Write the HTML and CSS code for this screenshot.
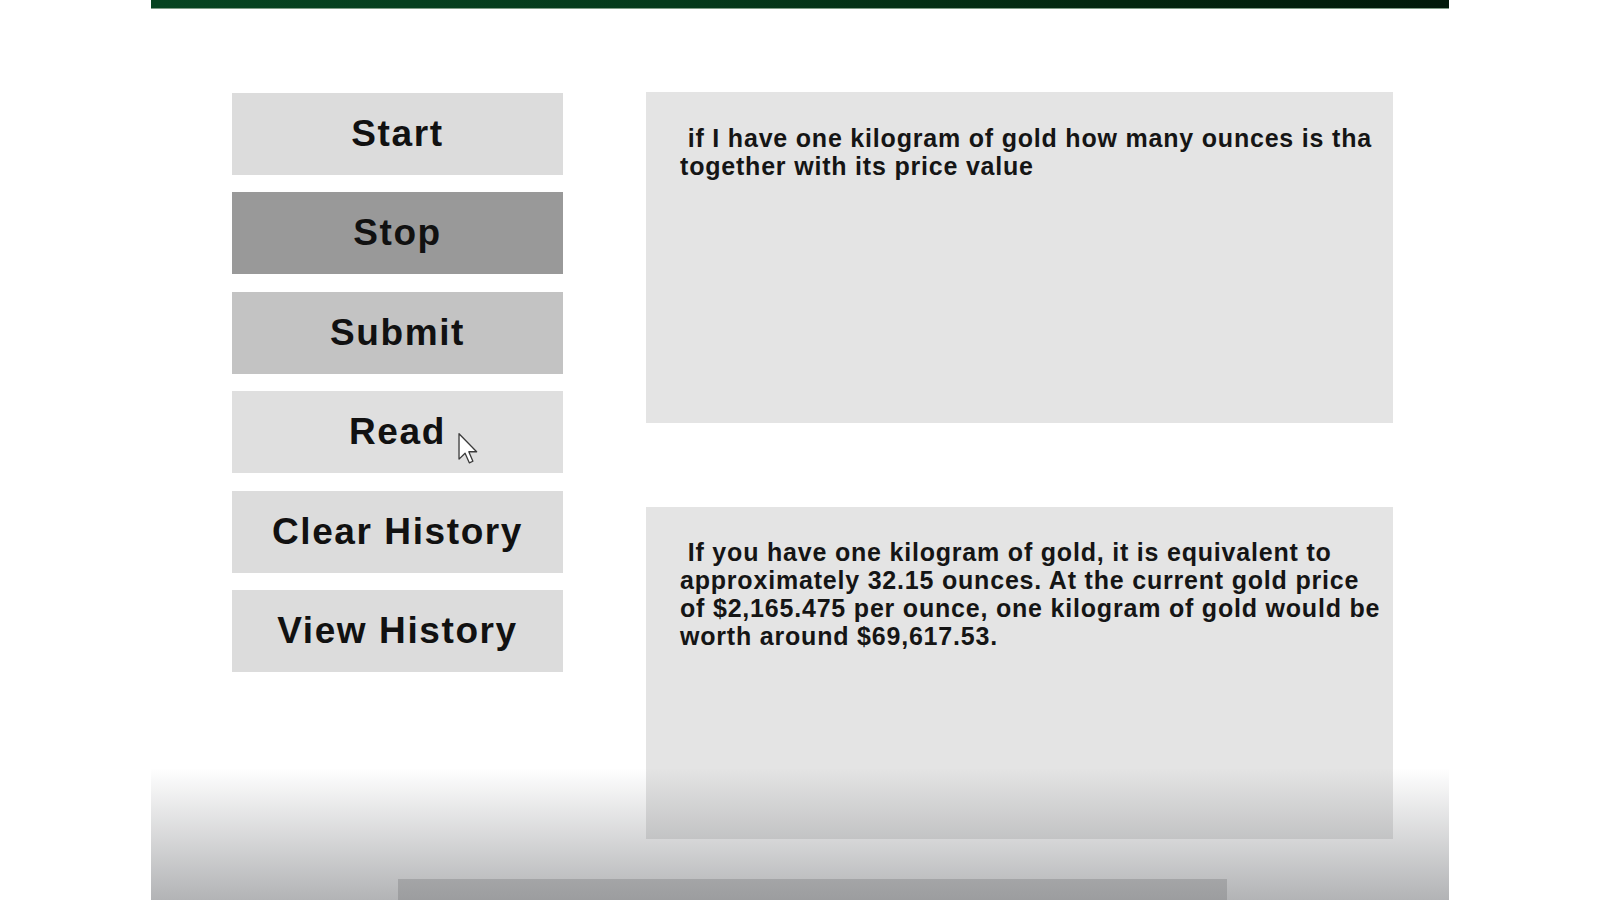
FILE: index.html
```html
<!DOCTYPE html>
<html lang="en">
<head>
<meta charset="utf-8">
<title>Voice Assistant</title>
<link rel="stylesheet" href="styles.css">
</head>
<body>
<div class="frame">
  <div class="topbar"></div>
  <main class="content">
    <div class="buttons">
      <button class="btn btn-start">Start</button>
      <button class="btn btn-stop">Stop</button>
      <button class="btn btn-submit">Submit</button>
      <button class="btn btn-read">Read
        <svg class="cursor" width="20" height="31" viewBox="0 0 12 19" aria-hidden="true">
          <path d="M0.5 0.5 L0.5 16 L4.2 12.4 L6.8 18.3 L9 17.3 L6.5 11.5 L11.3 11.5 Z" fill="#ffffff" stroke="#3a3a3a" stroke-width="0.8" stroke-linejoin="round"/>
        </svg>
      </button>
      <button class="btn btn-clear">Clear History</button>
      <button class="btn btn-view">View History</button>
    </div>
    <div class="panels">
      <div class="panel panel-question">
        <p class="panel-text">&nbsp;if I have one kilogram of gold how many ounces is tha<br>together with its price value</p>
      </div>
      <div class="panel panel-answer">
        <p class="panel-text">&nbsp;If you have one kilogram of gold, it is equivalent to<br>approximately 32.15 ounces. At the current gold price<br>of $2,165.475 per ounce, one kilogram of gold would be<br>worth around $69,617.53.</p>
      </div>
    </div>
  </main>
  <div class="bottom-bar"></div>
  <div class="fade"></div>
</div>
</body>
</html>
```

FILE: styles.css
```css
html, body {
  margin: 0;
  padding: 0;
  background: #ffffff;
}

body {
  font-family: "Liberation Sans", Arial, sans-serif;
  color: #111111;
  overflow: hidden;
}

.frame {
  position: relative;
  width: 1298px;
  height: 900px;
  margin: 0 auto;
  overflow: hidden;
  background: #ffffff;
}

.topbar {
  height: 8px;
  background: linear-gradient(90deg, #074421 0%, #053a1b 40%, #03260f 75%, #01190a 100%);
  border-bottom: 1.5px solid #7f9c86;
}

.content {
  display: flex;
  gap: 83px;
  padding: 82.5px 0 0 81px;
}

.buttons {
  display: flex;
  flex-direction: column;
  gap: 17.5px;
  width: 331px;
  margin-top: 1px;
}

.btn {
  position: relative;
  display: flex;
  align-items: center;
  justify-content: center;
  height: 82px;
  padding: 0;
  border: none;
  font-family: "Liberation Sans", Arial, sans-serif;
  font-weight: 700;
  font-size: 37px;
  letter-spacing: 1.6px;
  color: #111111;
  background: #dcdcdc;
}

.btn-stop { background: #999999; }
.btn-submit { background: #c3c3c3; }
.btn-read { background: #dfdfdf; }

.cursor {
  position: absolute;
  left: 226px;
  top: 42px;
}

.panels {
  display: flex;
  flex-direction: column;
  gap: 84px;
  width: 747px;
}

.panel {
  background: #e4e4e4;
  box-sizing: border-box;
  padding-left: 34px;
}

.panel-question {
  height: 331px;
  padding-top: 32px;
}

.panel-answer {
  height: 332px;
  padding-top: 31px;
}

.panel-text {
  margin: 0;
  font-size: 25px;
  line-height: 28px;
  font-weight: 700;
  letter-spacing: 0.8px;
  white-space: nowrap;
  color: #151515;
}

.bottom-bar {
  margin: 40px 0 0 247px;
  width: 829px;
  height: 30px;
  background: #d0d0d0;
}

.fade {
  position: absolute;
  left: 0;
  right: 0;
  top: 768px;
  bottom: 0;
  background: linear-gradient(180deg, rgba(108, 110, 114, 0) 0%, rgba(108, 110, 114, 0.28) 54%, rgba(108, 110, 114, 0.52) 100%);
  pointer-events: none;
}
```
